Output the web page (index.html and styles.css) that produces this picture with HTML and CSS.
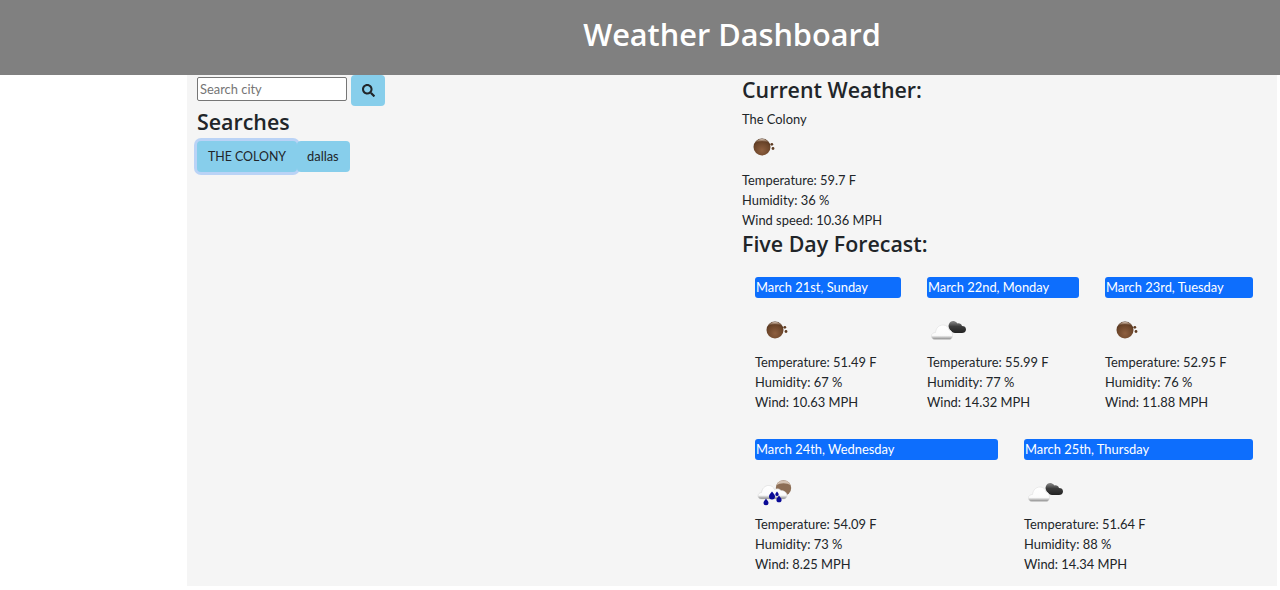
FILE: index.html
```html
<!DOCTYPE html>
<html lang="en">
<head>
<meta charset="utf-8">
<title>Weather Dashboard</title>
<link rel="stylesheet" href="styles.css">
</head>
<body>
<svg class="defs" width="0" height="0" aria-hidden="true">
  <defs>
    <radialGradient id="ball" cx="0.5" cy="0.7" r="0.75">
      <stop offset="0" stop-color="#8f6040"/>
      <stop offset="0.65" stop-color="#6a4429"/>
      <stop offset="1" stop-color="#3f2716"/>
    </radialGradient>
    <linearGradient id="ballTop" x1="0" y1="0" x2="0" y2="1">
      <stop offset="0" stop-color="#e0cfc0"/>
      <stop offset="1" stop-color="#8a5c3a" stop-opacity="0"/>
    </linearGradient>
    <linearGradient id="white" x1="0" y1="0" x2="0" y2="1">
      <stop offset="0" stop-color="#ffffff"/>
      <stop offset="0.72" stop-color="#fbfbfb"/>
      <stop offset="1" stop-color="#858585"/>
    </linearGradient>
    <linearGradient id="dark" x1="0" y1="0" x2="0" y2="1">
      <stop offset="0" stop-color="#8a8a8a"/>
      <stop offset="0.45" stop-color="#3c3c3c"/>
      <stop offset="1" stop-color="#222"/>
    </linearGradient>
    <symbol id="i-clear" viewBox="0 0 40 40">
      <circle cx="20" cy="18" r="8.500" fill="url(#ball)"/>
      <path d="M12.500 14.500a8.500 8.500 0 0 1 15 0a9 5 0 0 0-15 0z" fill="url(#ballTop)"/>
      <circle cx="29.800" cy="15.300" r="1.400" fill="#5f3d24"/>
      <circle cx="31" cy="19.500" r="1.400" fill="#5f3d24"/>
    </symbol>
    <symbol id="i-cloud" viewBox="0 0 40 40">
      <path d="M22 12c1-2.500 3.500-3.500 6-2.500c1.500.5 2 1.500 2.500 2c2-.5 4 .5 4.500 2.500c2.500 0 4 1 4 3.500s-2 3.500-4 3.500h-7c-3 0-8-5-6-9z" fill="url(#dark)"/>
      <path d="M8 27.500c-2.500 0-3.500-1.500-3.500-3.500c0-2.500 2-3.500 4-3.500c.5-4 3-7.500 7.500-7.500c3.500 0 5.500 2 6 5c2.500 0 3.500 3 3.500 5.500c0 2.500-1.500 4-3 4z" fill="url(#white)" stroke="#d9d9d9" stroke-width=".5"/>
    </symbol>
    <symbol id="i-rain" viewBox="0 0 40 40">
      <circle cx="28.500" cy="14" r="7.700" fill="#8d6e55"/>
      <path d="M21.500 11a7.700 7.700 0 0 1 14 0a9 5 0 0 0-14 0z" fill="#d4c2b2"/>
      <path d="M6 25c-2 0-3-1.500-3-3c0-2 1.500-3.500 3.500-3.500c.5-4 3.500-7 7-7c3 0 5 1.500 6 4c2-1 5-1 6.500 1c3 0 6 2 6 4.500s-1.500 4-3 4z" fill="url(#white)" stroke="#d0d0d0" stroke-width=".5"/>
      <path d="M11 24.500c1 1.800 2.500 2.800 2.500 4.300a2.500 2.500 0 0 1-5 0c0-1.500 1.500-2.500 2.500-4.300z" fill="#0a0a96"/>
      <path d="M17 17.500c1.300 2 3 3 3 4.900a3 3 0 0 1-6 0c0-1.900 1.700-2.900 3-4.900z" fill="#0a0a96"/>
      <path d="M24 21.500c1.100 1.700 2.600 2.600 2.600 4.200a2.600 2.600 0 0 1-5.200 0c0-1.600 1.500-2.500 2.600-4.200z" fill="#0a0a96"/>
      <path d="M22 17.500c.8 1.300 1.700 1.900 1.700 2.900a1.700 1.700 0 0 1-3.400 0c0-1 .9-1.600 1.700-2.900z" fill="#0a0a96"/>
    </symbol>
  </defs>
</svg>

<header class="banner"><h1>Weather Dashboard</h1></header>

<main class="board">
  <section class="side">
    <form class="search">
      <input class="search-input" type="text" placeholder="Search city">
      <button class="search-btn" type="button" aria-label="Search">
        <svg viewBox="0 0 512 512" width="13" height="13"><path fill="#212529" d="M505 442.700 405.300 343c-4.500-4.500-10.600-7-17-7H372c27.600-35.300 44-79.700 44-128C416 93.100 322.900 0 208 0S0 93.100 0 208s93.100 208 208 208c48.300 0 92.700-16.400 128-44v16.300c0 6.400 2.500 12.500 7 17l99.700 99.700c9.400 9.400 24.600 9.400 33.900 0l28.300-28.300c9.400-9.400 9.400-24.600.1-34zM208 336c-70.700 0-128-57.200-128-128 0-70.700 57.200-128 128-128 70.700 0 128 57.200 128 128 0 70.700-57.200 128-128 128z"/></svg>
      </button>
    </form>
    <h2 class="side-title">Searches</h2>
    <div class="history">
      <button class="city focused" type="button">THE COLONY</button>
      <button class="city" type="button">dallas</button>
    </div>
  </section>

  <section class="weather">
    <h2 class="now">Current Weather:</h2>
    <p class="place">The Colony</p>
    <svg class="icon"><use href="#i-clear"/></svg>
    <p>Temperature: 59.7 F</p>
    <p>Humidity: 36 %</p>
    <p>Wind speed: 10.36 MPH</p>
    <h2 class="five">Five Day Forecast:</h2>
    <div class="row row-three">
      <article class="day">
        <h3>March 21st, Sunday</h3>
        <svg class="icon"><use href="#i-clear"/></svg>
        <p>Temperature: 51.49 F</p><p>Humidity: 67 %</p><p>Wind: 10.63 MPH</p>
      </article>
      <article class="day">
        <h3>March 22nd, Monday</h3>
        <svg class="icon"><use href="#i-cloud"/></svg>
        <p>Temperature: 55.99 F</p><p>Humidity: 77 %</p><p>Wind: 14.32 MPH</p>
      </article>
      <article class="day">
        <h3>March 23rd, Tuesday</h3>
        <svg class="icon"><use href="#i-clear"/></svg>
        <p>Temperature: 52.95 F</p><p>Humidity: 76 %</p><p>Wind: 11.88 MPH</p>
      </article>
    </div>
    <div class="row row-two">
      <article class="day">
        <h3>March 24th, Wednesday</h3>
        <svg class="icon"><use href="#i-rain"/></svg>
        <p>Temperature: 54.09 F</p><p>Humidity: 73 %</p><p>Wind: 8.25 MPH</p>
      </article>
      <article class="day">
        <h3>March 25th, Thursday</h3>
        <svg class="icon"><use href="#i-cloud"/></svg>
        <p>Temperature: 51.64 F</p><p>Humidity: 88 %</p><p>Wind: 14.34 MPH</p>
      </article>
    </div>
  </section>
</main>
</body>
</html>
```

FILE: styles.css
```css
* { box-sizing: border-box; }
html, body { margin: 0; padding: 0; }
body {
  background: #fff;
  color: #212529;
  font-family: "Lato", "Open Sans", "Liberation Sans", sans-serif;
  font-size: 12.900px;
  line-height: 20px;
  overflow: hidden;
}
.defs { position: absolute; }
p, h1, h2, h3 { margin: 0; }

.banner {
  background: #808080;
  height: 75px;
  padding-left: 187px;
  padding-right: 3px;
  display: flex;
  align-items: center;
  justify-content: center;
}
.banner h1 {
  color: #fff;
  font-family: "Open Sans", sans-serif;
  font-size: 30.700px;
  font-weight: 600;
  line-height: 40px;
  margin-top: -7px;
}

.board {
  display: flex;
  margin: 0 3px 0 187px;
  height: 511px;
  background: #f5f5f5;
}
.side { width: 555px; padding-left: 10px; }
.weather { flex: 1; min-width: 0; padding-right: 11px; }

.search { display: flex; align-items: flex-start; gap: 4px; }
.search-input {
  width: 150px;
  height: 24px;
  margin-top: 2px;
  padding: 1px 2px;
  border: 1px solid #767676;
  border-radius: 2px;
  background: #fff;
  font: inherit;
  color: #212529;
}
.search-input::placeholder { color: #757575; }
.search-btn {
  width: 34px;
  height: 31px;
  border: 0;
  border-radius: 4px;
  background: #87ceeb;
  padding: 0;
  display: flex;
  align-items: center;
  justify-content: center;
}
.side-title {
  font-family: "Open Sans", sans-serif;
  font-size: 21.400px;
  font-weight: 600;
  line-height: 30px;
  margin-top: 1px;
}
.history { display: flex; margin-top: 4px; }
.city {
  height: 31px;
  padding: 0 11px 2px 10px;
  border: 0;
  border-radius: 4px;
  background: #87ceeb;
  color: #212529;
  font: inherit;
  white-space: nowrap;
}
.city.focused {
  width: 100px;
  padding: 0;
  font-size: 12.400px;
  box-shadow: 0 0 0 3px rgba(13, 110, 253, .25);
}

.weather h2 {
  font-family: "Open Sans", sans-serif;
  font-size: 21.400px;
  font-weight: 600;
  line-height: 30px;
}
.place { margin-top: 4px; }
.icon { display: block; width: 40px; height: 40px; }
.weather > .icon { margin-bottom: 1px; }
.weather > .five { margin-top: -1px; }

.row { display: grid; column-gap: 26px; padding: 0 13px; margin-top: 18px; }
.row-three { grid-template-columns: 146px 152px 1fr; }
.row-two { grid-template-columns: 243px 1fr; margin-top: 27px; }
.day h3 {
  background: #0d6efd;
  color: #fff;
  font-size: 12.900px;
  font-weight: 400;
  line-height: 21px;
  border-radius: 3px;
  padding: 0 1px;
}
.day .icon { margin: 14px 0 0; }
```
